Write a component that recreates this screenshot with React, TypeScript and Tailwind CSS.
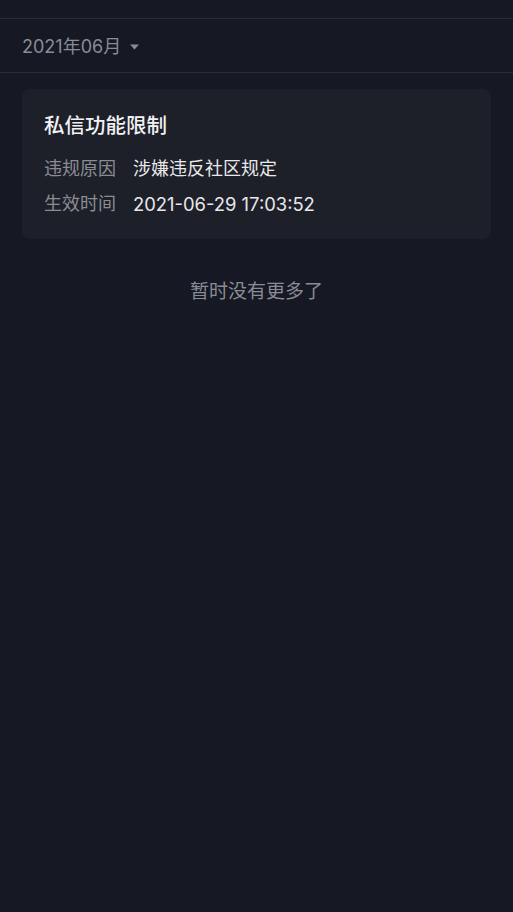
export default function App() {
  const font = { fontFamily: 'Inter, "Noto Sans CJK SC", sans-serif' };
  return (
    <div className="min-h-[912px] w-full bg-[#161823] text-white" style={font}>
      <div className="h-[18px]" />
      <div className="flex h-[55px] items-center border-y border-[#2a2c36] px-[22px] pt-[2px]">
        <span className="text-[18px] text-[#8a8c94]">2021年06月</span>
        <svg className="ml-[9px]" width="9" height="6" viewBox="0 0 9 6">
          <path d="M0 0.5 L9 0.5 L4.5 5.5 Z" fill="#8a8c94" />
        </svg>
      </div>
      <div className="px-[22px] pt-[16px]">
        <div className="rounded-[8px] bg-[#1e2029] px-[22px] pb-[22px] pt-[22px]">
          <div className="text-[20.5px] font-medium leading-[30px] text-[#f2f2f4]">私信功能限制</div>
          <div className="mt-[15px] flex items-center text-[18px] leading-[26px]">
            <span className="w-[89px] text-[#8a8c94]">违规原因</span>
            <span className="text-[#e8e8ea]">涉嫌违反社区规定</span>
          </div>
          <div className="mt-[9px] flex items-center text-[18px] leading-[26px]">
            <span className="w-[89px] text-[#8a8c94]">生效时间</span>
            <span className="text-[18.4px] text-[#e8e8ea]">2021-06-29 17:03:52</span>
          </div>
        </div>
      </div>
      <div className="mt-[39px] text-center text-[19px] leading-[28px] text-[#8a8c94]">暂时没有更多了</div>
    </div>
  );
}
